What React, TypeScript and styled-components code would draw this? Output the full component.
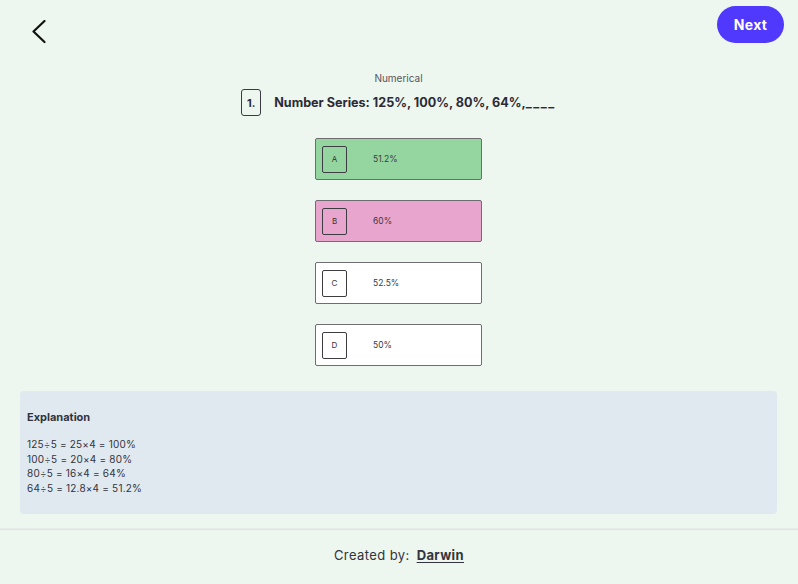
import React from "react";
import styled, { createGlobalStyle } from "styled-components";

const Global = createGlobalStyle`
  html, body { margin: 0; padding: 0; background: #edf6ef; }
  body { font-family: "Inter", "Noto Sans", sans-serif; color: #2b2b36; }
  * { box-sizing: border-box; }
`;

const Page = styled.div`
  width: 798px;
  min-height: 584px;
  display: flex;
  flex-direction: column;
  background: #edf6ef;
`;

const Header = styled.div`
  display: flex;
  justify-content: space-between;
  align-items: flex-start;
  height: 68px;
  padding: 6px 14px 0 31px;
`;

const BackButton = styled.button`
  border: none;
  background: transparent;
  padding: 0;
  margin-top: 14px;
  width: 18px;
  height: 25px;
  cursor: pointer;
  display: flex;
`;

const NextButton = styled.button`
  width: 67px;
  height: 37px;
  border: none;
  border-radius: 19px;
  background: #5038fd;
  color: #fff;
  font-family: "Inter", sans-serif;
  font-weight: 700;
  font-size: 14px;
  letter-spacing: 0.3px;
  cursor: pointer;
`;

const Main = styled.div`
  display: flex;
  flex-direction: column;
  align-items: center;
  padding-right: 1px;
`;

const Category = styled.div`
  font-size: 10px;
  color: #555560;
  line-height: 20px;
`;

const QuestionRow = styled.div`
  display: flex;
  align-items: center;
  gap: 13px;
  margin-top: 1px;
`;

const QNum = styled.div`
  width: 20px;
  height: 27px;
  border: 1px solid #3a3a40;
  border-radius: 3px;
  display: flex;
  align-items: center;
  justify-content: center;
  font-weight: 700;
  font-size: 11px;
`;

const QText = styled.div`
  font-weight: 700;
  font-size: 12.6px;
`;

const Blanks = styled.span`
  letter-spacing: 1.5px;
`;

const Options = styled.div`
  display: flex;
  flex-direction: column;
  gap: 20px;
  margin-top: 22px;
`;

const Option = styled.div<{ $bg: string }>`
  width: 167px;
  height: 42px;
  border: 1px solid #6d6d72;
  border-radius: 2px;
  background: ${(p) => p.$bg};
  display: flex;
  align-items: center;
  padding-left: 6px;
`;

const Letter = styled.div`
  width: 25px;
  height: 27px;
  border: 1px solid #3c3c42;
  border-radius: 2px;
  display: flex;
  align-items: center;
  justify-content: center;
  font-size: 8px;
  color: #333;
`;

const Value = styled.div`
  margin-left: 26px;
  font-size: 8.5px;
  color: #3a3a44;
`;

const Explanation = styled.div`
  margin: 25px 21px 15px 20px;
  background: #dfe9ef;
  border-radius: 4px;
  padding: 19px 7px 20px 7px;
  height: 123px;
`;

const ExpTitle = styled.div`
  font-weight: 700;
  font-size: 11px;
  color: #33333d;
  margin-bottom: 13px;
`;

const ExpLine = styled.div`
  font-size: 10px;
  line-height: 14.5px;
  letter-spacing: 0.2px;
  color: #33333d;
`;

const Footer = styled.div`
  border-top: 1px solid #dee4df;
  box-shadow: 0 -1px 0 #e6ece7;
  height: 55px;
  display: flex;
  align-items: center;
  justify-content: center;
  font-size: 13px;
  letter-spacing: 0.4px;
  color: #33333d;
  gap: 7px;
  padding-bottom: 4px;
`;

const Author = styled.a`
  font-weight: 700;
  color: #33333d;
  text-decoration: underline;
  text-underline-offset: 2px;
`;

const options = [
  { l: "A", v: "51.2%", bg: "#95d6a0" },
  { l: "B", v: "60%", bg: "#e8a6cf" },
  { l: "C", v: "52.5%", bg: "#ffffff" },
  { l: "D", v: "50%", bg: "#ffffff" },
];

const lines = [
  "125÷5 = 25×4 = 100%",
  "100÷5 = 20×4 = 80%",
  "80÷5 = 16×4 = 64%",
  "64÷5 = 12.8×4 = 51.2%",
];

export default function App() {
  return (
    <Page>
      <Global />
      <Header>
        <BackButton aria-label="Back">
          <svg width="18" height="25" viewBox="0 0 18 25">
            <polyline points="13.5,1 2.5,11.5 13.5,22" fill="none" stroke="#111" strokeWidth="2.2" strokeLinecap="round" strokeLinejoin="round" />
          </svg>
        </BackButton>
        <NextButton>Next</NextButton>
      </Header>
      <Main>
        <Category>Numerical</Category>
        <QuestionRow>
          <QNum>1.</QNum>
          <QText>
            Number Series: 125%, 100%, 80%, 64%,<Blanks>____</Blanks>
          </QText>
        </QuestionRow>
        <Options>
          {options.map((o) => (
            <Option key={o.l} $bg={o.bg}>
              <Letter>{o.l}</Letter>
              <Value>{o.v}</Value>
            </Option>
          ))}
        </Options>
      </Main>
      <Explanation>
        <ExpTitle>Explanation</ExpTitle>
        {lines.map((l) => (
          <ExpLine key={l}>{l}</ExpLine>
        ))}
      </Explanation>
      <Footer>
        <span>Created by:</span>
        <Author>Darwin</Author>
      </Footer>
    </Page>
  );
}
